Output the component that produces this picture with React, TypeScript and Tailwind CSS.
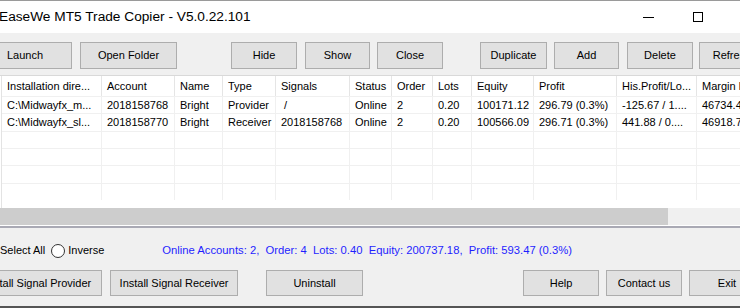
import React from "react";

const columns = [
	{ key: "dir", label: "Installation dire...", width: 100 },
	{ key: "account", label: "Account", width: 73 },
	{ key: "name", label: "Name", width: 48 },
	{ key: "type", label: "Type", width: 53 },
	{ key: "signals", label: "Signals", width: 74 },
	{ key: "status", label: "Status", width: 42 },
	{ key: "order", label: "Order", width: 41 },
	{ key: "lots", label: "Lots", width: 39 },
	{ key: "equity", label: "Equity", width: 62 },
	{ key: "profit", label: "Profit", width: 83 },
	{ key: "his", label: "His.Profit/Lo...", width: 80 },
	{ key: "margin", label: "Margin l", width: 100 },
];

const rows: Record<string, string>[] = [
	{
		dir: "C:\\Midwayfx_m...",
		account: "2018158768",
		name: "Bright",
		type: "Provider",
		signals: " /",
		status: "Online",
		order: "2",
		lots: "0.20",
		equity: "100171.12",
		profit: "296.79 (0.3%)",
		his: "-125.67 / 1....",
		margin: "46734.4",
	},
	{
		dir: "C:\\Midwayfx_sl...",
		account: "2018158770",
		name: "Bright",
		type: "Receiver",
		signals: "2018158768",
		status: "Online",
		order: "2",
		lots: "0.20",
		equity: "100566.09",
		profit: "296.71 (0.3%)",
		his: "441.88 / 0....",
		margin: "46918.7",
	},
];

const EMPTY_ROWS = 4;

function Btn({ label, className }: { label: string; className: string }) {
	return (
		<div
			className={`shrink-0 flex items-center justify-center bg-[#e1e1e1] border border-[#adadad] text-[11px] text-black whitespace-nowrap overflow-hidden ${className}`}
		>
			{label}
		</div>
	);
}

function App() {
	return (
		<div className="w-[740px] h-[308px] overflow-hidden bg-[#f0f0f0] flex flex-col font-['Liberation_Sans',Arial,sans-serif] text-black">
			{/* Title bar */}
			<div className="h-[33px] shrink-0 bg-white border-t border-[#9a9a9a] flex items-center">
				<span className="ml-[-1px] text-[13.7px] whitespace-nowrap mt-[1px]">
					EaseWe MT5 Trade Copier - V5.0.22.101
				</span>
				<div className="ml-auto flex items-center">
					<div className="w-[11px] h-px bg-black mr-[39px]" />
					<div className="w-[10px] h-[10px] border border-black mr-[37px]" />
				</div>
			</div>

			{/* Toolbar */}
			<div className="flex h-[27px] mt-[9px] shrink-0">
				<Btn label="Launch" className="ml-[-22px] w-[94px]" />
				<Btn label="Open Folder" className="ml-[8px] w-[97px]" />
				<Btn label="Hide" className="ml-[54px] w-[66px]" />
				<Btn label="Show" className="ml-[8px] w-[65px]" />
				<Btn label="Close" className="ml-[7px] w-[66px]" />
				<Btn label="Duplicate" className="ml-[37px] w-[67px]" />
				<Btn label="Add" className="ml-[7px] w-[65px]" />
				<Btn label="Delete" className="ml-[8px] w-[66px]" />
				<Btn label="Refresh" className="ml-[6px] w-[66px]" />
			</div>

			{/* Grid */}
			<div className="mt-[6px] h-[153px] shrink-0 flex flex-col bg-white border-t border-[#d9d9d9] border-b-2 border-b-[#a9a9b4] pl-[1px]">
				<div className="flex-1 overflow-hidden border-l border-[#e3e3e3]">
					<div className="flex h-[20px] text-[11px]">
						{columns.map((c) => (
							<div
								key={c.key}
								style={{ width: c.width }}
								className="shrink-0 border-r border-[#e5e5e5] pl-[5px] flex items-center whitespace-nowrap overflow-hidden"
							>
								{c.label}
							</div>
						))}
					</div>
					{rows.map((r, i) => (
						<div key={i} className="flex h-[17.33px] text-[11px] border-t border-[#f0f0f0]">
							{columns.map((c) => (
								<div
									key={c.key}
									style={{ width: c.width }}
									className="shrink-0 border-r border-[#f0f0f0] pl-[5px] flex items-center whitespace-pre overflow-hidden"
								>
									{r[c.key]}
								</div>
							))}
						</div>
					))}
					{Array.from({ length: EMPTY_ROWS }).map((_, i) => (
						<div key={i} className="flex h-[17.33px] border-t border-[#f0f0f0]">
							{columns.map((c) => (
								<div
									key={c.key}
									style={{ width: c.width }}
									className="shrink-0 border-r border-[#f0f0f0]"
								/>
							))}
						</div>
					))}
				</div>
				{/* Horizontal scrollbar */}
				<div className="h-[17px] shrink-0 bg-[#f0f0f0] flex ml-[-1px] mb-[1px]">
					<div className="w-[668px] bg-[#cdcdcd]" />
				</div>
			</div>

			{/* Status line */}
			<div className="h-[42px] shrink-0 flex items-center text-[11px] pt-[3px]">
				<span>Select All</span>
				<span className="ml-[6px] w-[14px] h-[14px] rounded-full border border-[#333] bg-white" />
				<span className="ml-[3px]">Inverse</span>
				<span className="ml-[58px] text-[#1f1fff] text-[11.25px] whitespace-pre">
					Online Accounts: 2,  Order: 4  Lots: 0.40  Equity: 200737.18,  Profit: 593.47 (0.3%)
				</span>
			</div>

			{/* Bottom buttons */}
			<div className="flex h-[26px] shrink-0">
				<Btn label="Install Signal Provider" className="ml-[-26px] w-[128px]" />
				<Btn label="Install Signal Receiver" className="ml-[8px] w-[128px]" />
				<Btn label="Uninstall" className="ml-[28px] w-[97px]" />
				<Btn label="Help" className="ml-[160px] w-[76px]" />
				<Btn label="Contact us" className="ml-[7px] w-[76px]" />
				<Btn label="Exit" className="ml-[7px] w-[76px]" />
			</div>

			<div className="mt-auto h-[2px] bg-[#555]" />
		</div>
	);
}

export default App;
